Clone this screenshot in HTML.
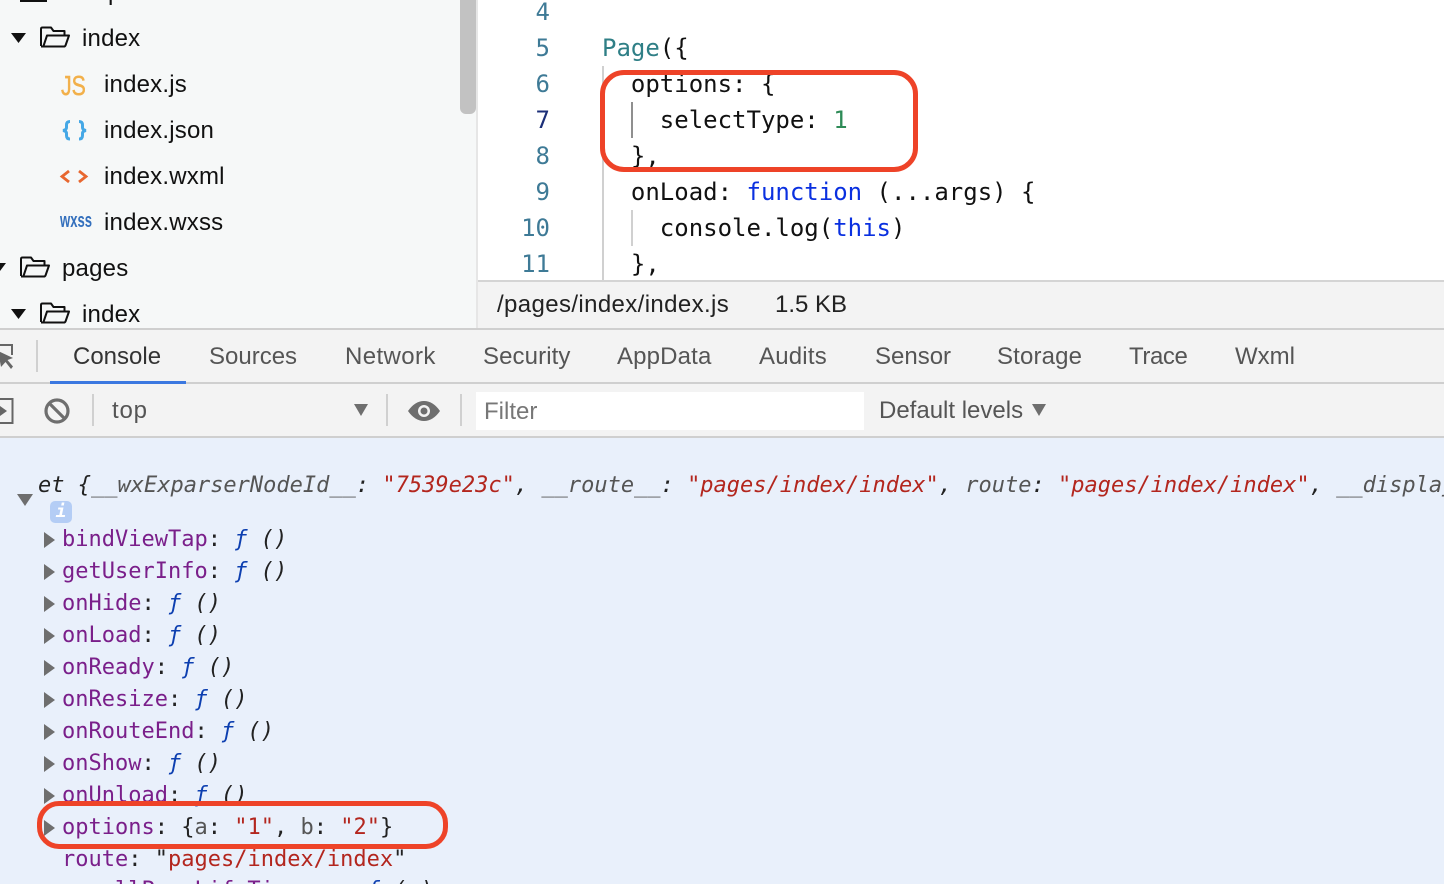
<!DOCTYPE html>
<html><head><meta charset="utf-8"><style>
html{margin:0;padding:0;overflow:hidden;width:1444px;height:884px}
body{margin:0;padding:0;width:1444px;height:884px;overflow:hidden;position:relative;background:#e9f0fb;font-family:"Liberation Sans",sans-serif}
.a,.t,.c,.l,.k{position:absolute;white-space:pre}
.t{font-size:24px;line-height:36px;color:#111;height:36px;letter-spacing:.2px}
.k{font-size:24px;line-height:36px;color:#555;height:36px}
.c{font:24px/36px "DejaVu Sans Mono",monospace;color:#111;height:36px;left:602px}
.n{position:absolute;font:24px/36px "DejaVu Sans Mono",monospace;color:#3e7a96;width:70px;left:480px;text-align:right;height:36px}
.l{font:22px/32px "DejaVu Sans Mono",monospace;color:#222;left:62px;height:32px}
.p{color:#7a1f8a}.s{color:#b3261e}.f{color:#0d3fb0;font-style:italic}.g{color:#555}
svg{position:absolute;overflow:visible}
</style></head><body>

<div class="a" style="left:0;top:0;width:478px;height:328px;background:#f6f8f8"></div>
<div class="a" style="left:460px;top:0;width:16px;height:114px;background:#c2c2c2;border-radius:0 0 6px 6px"></div>
<div class="a" style="left:476px;top:0;width:2px;height:328px;background:#e6e6e6"></div>

<div class="a" style="left:20px;top:0;width:27px;height:2px;background:#111"></div>
<div class="t" style="left:62px;top:-25px">components</div>

<svg style="left:11px;top:33px" width="16" height="12"><path d="M0 0H15L7.500 10Z" fill="#111"/></svg>
<svg style="left:40px;top:26px" width="30" height="22"><path d="M1 20V3Q1 1.500 2.500 1.500H11L13.500 5H24.500V9M1 20.500H24Q25 20.500 25.500 19.500L29 9.500H7L3.500 20" fill="none" stroke="#111" stroke-width="2" stroke-linejoin="round"/></svg>
<div class="t" style="left:82px;top:21px">index</div>

<div class="a" style="left:61px;top:71px;font:28px/30px 'Liberation Sans',sans-serif;color:#f2b04a;-webkit-text-stroke:.5px #f2b04a;transform:scaleX(.76);transform-origin:0 0">JS</div>
<div class="t" style="left:104px;top:67px">index.js</div>

<svg style="left:0;top:0" width="100" height="150"><path d="M70 121.500Q66.500 121.500 66.500 125V127.500Q66.500 130 63 130.500Q66.500 131 66.500 133.500V135.500Q66.500 139 70 139M79 121.500Q82.500 121.500 82.500 125V127.500Q82.500 130 86 130.500Q82.500 131 82.500 133.500V135.500Q82.500 139 79 139" fill="none" stroke="#45a8e6" stroke-width="3"/></svg>
<div class="t" style="left:104px;top:113px">index.json</div>

<svg style="left:60px;top:170px" width="30" height="14"><path d="M9 1L2 6.500L9 12M19 1L26 6.500L19 12" fill="none" stroke="#e8672f" stroke-width="2.800"/></svg>
<div class="t" style="left:104px;top:159px">index.wxml</div>

<div class="a" style="left:60px;top:211px;font:bold 20px/20px 'Liberation Sans',sans-serif;color:#3470bd;transform:scaleX(.655);transform-origin:0 0">wxss</div>
<div class="t" style="left:104px;top:205px">index.wxss</div>

<svg style="left:-9px;top:263px" width="16" height="12"><path d="M0 0H15L7.500 10Z" fill="#111"/></svg>
<svg style="left:20px;top:256px" width="30" height="22"><path d="M1 20V3Q1 1.500 2.500 1.500H11L13.500 5H24.500V9M1 20.500H24Q25 20.500 25.500 19.500L29 9.500H7L3.500 20" fill="none" stroke="#111" stroke-width="2" stroke-linejoin="round"/></svg>
<div class="t" style="left:62px;top:251px">pages</div>

<svg style="left:11px;top:309px" width="16" height="12"><path d="M0 0H15L7.500 10Z" fill="#111"/></svg>
<svg style="left:40px;top:302px" width="30" height="22"><path d="M1 20V3Q1 1.500 2.500 1.500H11L13.500 5H24.500V9M1 20.500H24Q25 20.500 25.500 19.500L29 9.500H7L3.500 20" fill="none" stroke="#111" stroke-width="2" stroke-linejoin="round"/></svg>
<div class="t" style="left:82px;top:297px">index</div>

<div class="a" style="left:478px;top:0;width:966px;height:280px;background:#fff;overflow:hidden"></div>
<div class="n" style="top:-6px">4</div>
<div class="n" style="top:30px">5</div>
<div class="n" style="top:66px">6</div>
<div class="n" style="top:102px;color:#1c2f78">7</div>
<div class="n" style="top:138px">8</div>
<div class="n" style="top:174px">9</div>
<div class="n" style="top:210px">10</div>
<div class="n" style="top:246px">11</div>

<div class="a" style="left:602px;top:66px;width:2px;height:214px;background:#d0d0d0"></div>
<div class="a" style="left:631px;top:102px;width:2px;height:36px;background:#8f8f8f"></div>
<div class="a" style="left:631px;top:210px;width:2px;height:36px;background:#d0d0d0"></div>

<div class="c" style="top:30px"><span style="color:#2f7f86">Page</span>({</div>
<div class="c" style="top:66px">  options: {</div>
<div class="c" style="top:102px">    selectType: <span style="color:#2e8b57">1</span></div>
<div class="c" style="top:138px">  },</div>
<div class="c" style="top:174px">  onLoad: <span style="color:#0a30e0">function</span> (...args) {</div>
<div class="c" style="top:210px">    console.log(<span style="color:#0a30e0">this</span>)</div>
<div class="c" style="top:246px">  },</div>

<div class="a" style="left:478px;top:280px;width:966px;height:48px;background:#f3f3f3;border-top:2px solid #d4d4d4;box-sizing:border-box"></div>
<div class="t" style="left:497px;top:287px;color:#222;letter-spacing:.38px">/pages/index/index.js</div>
<div class="t" style="left:775px;top:287px;color:#222;letter-spacing:0">1.5 KB</div>

<div class="a" style="left:0;top:328px;width:1444px;height:109px;background:#f3f3f3"></div>
<div class="a" style="left:0;top:328px;width:1444px;height:2px;background:#cfcfcf"></div>
<div class="a" style="left:0;top:382px;width:1444px;height:2px;background:#cfcfcf"></div>
<div class="a" style="left:0;top:436px;width:1444px;height:2px;background:#cfcfcf"></div>

<svg style="left:0;top:344px" width="14" height="28"><path d="M0 1H12V11" fill="none" stroke="#666" stroke-width="2"/><path d="M-2 8L13 15L7.500 17L13 23.500L11 26L5.500 19L1 24Z" fill="#666" transform="translate(0 -1)"/></svg>
<div class="a" style="left:36px;top:340px;width:2px;height:32px;background:#d0d0d0"></div>
<div class="a" style="left:50px;top:381px;width:136px;height:3px;background:#3b78e0"></div>

<div class="k" style="left:73px;top:339px;color:#333">Console</div>
<div class="k" style="left:209px;top:339px">Sources</div>
<div class="k" style="left:345px;top:339px;letter-spacing:.4px">Network</div>
<div class="k" style="left:483px;top:339px;letter-spacing:.1px">Security</div>
<div class="k" style="left:617px;top:339px;letter-spacing:.15px">AppData</div>
<div class="k" style="left:759px;top:339px;letter-spacing:.2px">Audits</div>
<div class="k" style="left:875px;top:339px">Sensor</div>
<div class="k" style="left:997px;top:339px;letter-spacing:.15px">Storage</div>
<div class="k" style="left:1129px;top:339px;letter-spacing:-.4px">Trace</div>
<div class="k" style="left:1235px;top:339px">Wxml</div>

<svg style="left:0;top:398px" width="14" height="26"><path d="M0 1H12.500V25H0" fill="none" stroke="#666" stroke-width="2"/><path d="M0 8L7 13L0 18Z" fill="#666"/></svg>
<svg style="left:44px;top:398px" width="26" height="26"><circle cx="13" cy="13" r="11" fill="none" stroke="#6e6e6e" stroke-width="3.200"/><path d="M5.500 5.500L20.500 20.500" stroke="#6e6e6e" stroke-width="3.200"/></svg>
<div class="a" style="left:92px;top:394px;width:2px;height:32px;background:#d0d0d0"></div>
<div class="k" style="left:112px;top:393px;letter-spacing:.8px">top</div>
<svg style="left:354px;top:404px" width="14" height="12"><path d="M0 0H14L7 12Z" fill="#6e6e6e"/></svg>
<div class="a" style="left:386px;top:394px;width:2px;height:32px;background:#d0d0d0"></div>
<svg style="left:408px;top:400px" width="32" height="22"><path d="M0 11Q7 1 16 1T32 11Q25 21 16 21T0 11Z" fill="#6e6e6e"/><circle cx="16" cy="11" r="6" fill="#f3f3f3"/><circle cx="16" cy="11" r="3.500" fill="#6e6e6e"/></svg>
<div class="a" style="left:460px;top:394px;width:2px;height:32px;background:#d0d0d0"></div>
<div class="a" style="left:476px;top:392px;width:388px;height:38px;background:#fff"></div>
<div class="k" style="left:484px;top:394px;color:#777">Filter</div>
<div class="k" style="left:879px;top:393px">Default levels</div>
<svg style="left:1032px;top:404px" width="14" height="12"><path d="M0 0H14L7 12Z" fill="#6e6e6e"/></svg>

<svg style="left:17px;top:494px" width="16" height="12"><path d="M0 0H16L8 12Z" fill="#6e6e6e"/></svg>
<div class="l" style="left:38px;top:470px;font-style:italic;width:1406px;overflow:hidden">et {<span class="g">__wxExparserNodeId__</span>: <span class="s">"7539e23c"</span>, <span class="g">__route__</span>: <span class="s">"pages/index/index"</span>, <span class="g">route</span>: <span class="s">"pages/index/index"</span>, <span class="g">__displayReporter__</span></div>
<div class="a" style="left:50px;top:501px;width:22px;height:22px;background:#b4cdf5;border-radius:5px"></div>
<div class="a" style="left:50px;top:501px;width:22px;height:22px;font:italic bold 18px/22px 'DejaVu Sans Mono',monospace;color:#fff;text-align:center">i</div>

<svg style="left:44px;top:532px" width="12" height="304"><path fill="#6e6e6e" d="M0 0L11 8L0 16ZM0 32L11 40L0 48ZM0 64L11 72L0 80ZM0 96L11 104L0 112ZM0 128L11 136L0 144ZM0 160L11 168L0 176ZM0 192L11 200L0 208ZM0 224L11 232L0 240ZM0 256L11 264L0 272ZM0 288L11 296L0 304Z"/></svg>

<div class="l" style="top:524px"><span class="p">bindViewTap</span>: <span class="f">ƒ</span> <i>()</i></div>
<div class="l" style="top:556px"><span class="p">getUserInfo</span>: <span class="f">ƒ</span> <i>()</i></div>
<div class="l" style="top:588px"><span class="p">onHide</span>: <span class="f">ƒ</span> <i>()</i></div>
<div class="l" style="top:620px"><span class="p">onLoad</span>: <span class="f">ƒ</span> <i>()</i></div>
<div class="l" style="top:652px"><span class="p">onReady</span>: <span class="f">ƒ</span> <i>()</i></div>
<div class="l" style="top:684px"><span class="p">onResize</span>: <span class="f">ƒ</span> <i>()</i></div>
<div class="l" style="top:716px"><span class="p">onRouteEnd</span>: <span class="f">ƒ</span> <i>()</i></div>
<div class="l" style="top:748px"><span class="p">onShow</span>: <span class="f">ƒ</span> <i>()</i></div>
<div class="l" style="top:780px"><span class="p">onUnload</span>: <span class="f">ƒ</span> <i>()</i></div>
<div class="l" style="top:812px"><span class="p">options</span>: {<span class="g">a</span>: <span class="s">"1"</span>, <span class="g">b</span>: <span class="s">"2"</span>}</div>
<div class="l" style="top:844px"><span class="p">route</span>: "<span class="s">pages/index/index</span>"</div>
<div class="l" style="top:875px"><span class="p">__callPageLifeTimes__</span>: <span class="f">ƒ</span> <i>(e)</i></div>

<div class="a" style="left:600px;top:70px;width:308px;height:92px;border:5px solid #ee4328;border-radius:24px"></div>
<div class="a" style="left:37px;top:801px;width:401px;height:38px;border:5px solid #ee4328;border-radius:22px"></div>
</body></html>
